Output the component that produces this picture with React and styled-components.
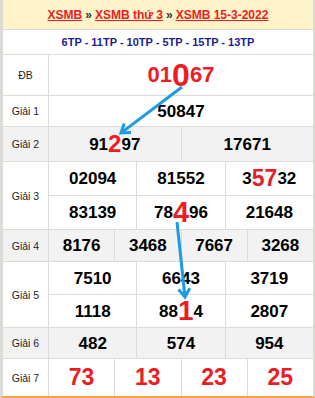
import React from 'react';
import styled, { createGlobalStyle } from 'styled-components';

const Global = createGlobalStyle`
  html, body { margin: 0; padding: 0; background: #fff; }
  body { font-family: "Liberation Sans", Arial, sans-serif; }
`;

const LINE = '#dedbd6';
const RED = '#ec1c24';

const Page = styled.div`
  position: relative;
  width: 315px;
  height: 398px;
`;

const Frame = styled.div`
  width: 315px;
  height: 398px;
  box-sizing: border-box;
  border-left: 3px solid ${LINE};
  border-right: 2px solid ${LINE};
  border-bottom: 2px solid #f5a04c;
  display: flex;
  flex-direction: column;
`;

const Header = styled.div`
  height: 30px;
  box-sizing: border-box;
  border-bottom: 1px solid ${LINE};
  background: #fff3c9;
  display: flex;
  align-items: center;
  justify-content: center;
  font-size: 12px;
  font-weight: bold;
  color: #333;
  white-space: nowrap;
`;

const Crumb = styled.a`
  color: ${RED};
  text-decoration: underline;
`;

const Sep = styled.span`
  margin: 0 3px;
  color: #333;
`;

const TpRow = styled.div`
  height: 25px;
  box-sizing: border-box;
  border-bottom: 1px solid ${LINE};
  display: flex;
  align-items: center;
  justify-content: center;
  font-size: 11px;
  font-weight: bold;
  color: #1d1c92;
  padding-bottom: 1px;
`;

const PrizeRow = styled.div`
  height: ${(p) => p.$h}px;
  box-sizing: border-box;
  border-bottom: ${(p) => (p.$last ? 'none' : `1px solid ${LINE}`)};
  display: grid;
  grid-template-columns: 45px 1fr;
  column-gap: 1px;
  background: ${LINE};
`;

const Label = styled.div`
  background: ${(p) => p.$bg};
  display: flex;
  align-items: center;
  justify-content: center;
  font-size: 10.5px;
  color: #1e1e28;
`;

const Values = styled.div`
  display: grid;
  grid-template-columns: repeat(${(p) => p.$cols}, 1fr);
  grid-auto-rows: 1fr;
  gap: 1px;
  background: ${LINE};
`;

const Cell = styled.div`
  background: ${(p) => p.$bg};
  display: flex;
  align-items: center;
  justify-content: center;
  font-size: ${(p) => p.$size || 17}px;
  font-weight: bold;
  color: ${(p) => (p.$red ? RED : '#000')};
  white-space: nowrap;
  line-height: 1;
  overflow: visible;
`;

const Hi = styled.span`
  color: ${RED};
  font-size: ${(p) => p.$s}px;
  line-height: 1;
`;

const Overlay = styled.svg`
  position: absolute;
  left: 0;
  top: 0;
  pointer-events: none;
`;

function Arrow({ x1, y1, x2, y2 }) {
  const dx = x2 - x1;
  const dy = y2 - y1;
  const L = Math.hypot(dx, dy);
  const ux = dx / L;
  const uy = dy / L;
  const len = 10;
  const arm = (ang) => {
    const c = Math.cos(ang);
    const s = Math.sin(ang);
    return [x2 - (ux * c - uy * s) * len, y2 - (ux * s + uy * c) * len];
  };
  const [ax, ay] = arm(0.6);
  const [bx, by] = arm(-0.6);
  return (
    <g stroke="#1b9ce0" strokeWidth="3" fill="none">
      <line x1={x1} y1={y1} x2={x2 - ux * 1.5} y2={y2 - uy * 1.5} />
      <polyline points={`${ax},${ay} ${x2},${y2} ${bx},${by}`} strokeLinejoin="miter" />
    </g>
  );
}

const WHITE = '#ffffff';
const GRAY = '#f2f2f2';

const rows = [
  {
    label: 'ĐB', h: 41, cols: 1, bg: WHITE,
    items: [
      <><Hi $s={22}>01</Hi><Hi $s={32}>0</Hi><Hi $s={22}>67</Hi></>,
    ],
  },
  { label: 'Giải 1', h: 31, cols: 1, bg: WHITE, items: ['50847'] },
  {
    label: 'Giải 2', h: 35, cols: 2, bg: GRAY,
    items: [<>91<Hi $s={24}>2</Hi>97</>, '17671'],
  },
  {
    label: 'Giải 3', h: 68, cols: 3, bg: WHITE,
    items: [
      '02094', '81552', <>3<Hi $s={23}>57</Hi>32</>,
      '83139', <>78<Hi $s={29}>4</Hi>96</>, '21648',
    ],
  },
  { label: 'Giải 4', h: 32, cols: 4, bg: GRAY, items: ['8176', '3468', '7667', '3268'] },
  {
    label: 'Giải 5', h: 66, cols: 3, bg: WHITE,
    items: ['7510', '6643', '3719', '1118', <>88<Hi $s={28}>1</Hi>4</>, '2807'],
  },
  { label: 'Giải 6', h: 31, cols: 3, bg: GRAY, items: ['482', '574', '954'] },
  { label: 'Giải 7', h: 37, cols: 4, bg: WHITE, red: true, size: 23, items: ['73', '13', '23', '25'], last: true },
];

export default function App() {
  return (
    <>
      <Global />
      <Page>
        <Frame>
          <Header>
            <Crumb>XSMB</Crumb>
            <Sep>»</Sep>
            <Crumb>XSMB thứ 3</Crumb>
            <Sep>»</Sep>
            <Crumb>XSMB 15-3-2022</Crumb>
          </Header>
          <TpRow>6TP - 11TP - 10TP - 5TP - 15TP - 13TP</TpRow>
          {rows.map((r) => (
            <PrizeRow key={r.label} $h={r.h} $last={r.last}>
              <Label $bg={r.bg}>{r.label}</Label>
              <Values $cols={r.cols}>
                {r.items.map((it, i) => (
                  <Cell key={i} $bg={r.bg} $red={r.red} $size={r.size}>
                    {it}
                  </Cell>
                ))}
              </Values>
            </PrizeRow>
          ))}
        </Frame>
        <Overlay width="315" height="398" viewBox="0 0 315 398">
          <Arrow x1={182} y1={87} x2={121} y2={133} />
          <Arrow x1={177} y1={222} x2={185} y2={297} />
        </Overlay>
      </Page>
    </>
  );
}
